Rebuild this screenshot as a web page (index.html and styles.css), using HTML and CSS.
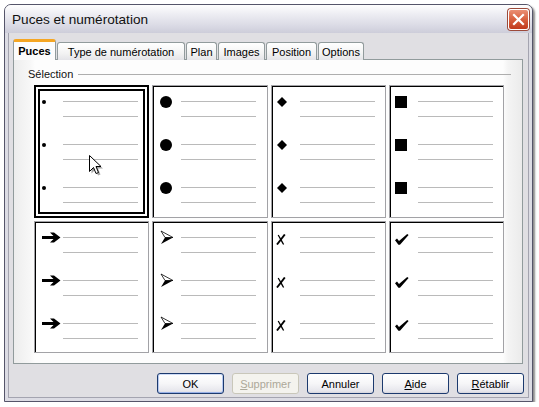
FILE: index.html
```html
<!DOCTYPE html>
<html lang="fr">
<head>
<meta charset="utf-8">
<title>Puces et numérotation</title>
<link rel="stylesheet" href="styles.css">
</head>
<body>
<div class="window">
  <div class="titlebar">
    <span class="title">Puces et numérotation</span>
    <span class="close"><svg width="13" height="13" viewBox="0 0 13 13"><path d="M2 2 L11 11 M11 2 L2 11" stroke="#fff" stroke-width="2.2" stroke-linecap="square"/></svg></span>
  </div>
  <div class="client">
    <div class="tabs">
      <div class="tab active t-puces">Puces</div>
      <div class="tab t-type">Type de numérotation</div>
      <div class="tab t-plan">Plan</div>
      <div class="tab t-images">Images</div>
      <div class="tab t-position">Position</div>
      <div class="tab t-options">Options</div>
    </div>
    <div class="panel">
      <div class="legend"><span>Sélection</span><span class="rule"></span></div>
      <div class="grid">
        <div class="cell selected">
          <div class="item"><span class="ico"><i class="dot"></i></span><span class="lines"><i></i><i></i></span></div>
          <div class="item"><span class="ico"><i class="dot"></i></span><span class="lines"><i></i><i></i></span></div>
          <div class="item"><span class="ico"><i class="dot"></i></span><span class="lines"><i></i><i></i></span></div>
        </div>
        <div class="cell">
          <div class="item"><span class="ico"><i class="circle"></i></span><span class="lines"><i></i><i></i></span></div>
          <div class="item"><span class="ico"><i class="circle"></i></span><span class="lines"><i></i><i></i></span></div>
          <div class="item"><span class="ico"><i class="circle"></i></span><span class="lines"><i></i><i></i></span></div>
        </div>
        <div class="cell">
          <div class="item"><span class="ico"><svg class="diamond" width="10" height="10" viewBox="0 0 10 10"><path d="M5 0 L10 5 L5 10 L0 5 Z"/></svg></span><span class="lines"><i></i><i></i></span></div>
          <div class="item"><span class="ico"><svg class="diamond" width="10" height="10" viewBox="0 0 10 10"><path d="M5 0 L10 5 L5 10 L0 5 Z"/></svg></span><span class="lines"><i></i><i></i></span></div>
          <div class="item"><span class="ico"><svg class="diamond" width="10" height="10" viewBox="0 0 10 10"><path d="M5 0 L10 5 L5 10 L0 5 Z"/></svg></span><span class="lines"><i></i><i></i></span></div>
        </div>
        <div class="cell">
          <div class="item"><span class="ico"><i class="square"></i></span><span class="lines"><i></i><i></i></span></div>
          <div class="item"><span class="ico"><i class="square"></i></span><span class="lines"><i></i><i></i></span></div>
          <div class="item"><span class="ico"><i class="square"></i></span><span class="lines"><i></i><i></i></span></div>
        </div>
        <div class="cell">
          <div class="item"><span class="ico"><svg class="arrow" width="19" height="11" viewBox="0 0 19 11"><path d="M0 4 H11.5 L8 0.5 H12 L18.5 5.5 L12 10.5 H8 L11.5 7 H0 Z"/></svg></span><span class="lines"><i></i><i></i></span></div>
          <div class="item"><span class="ico"><svg class="arrow" width="19" height="11" viewBox="0 0 19 11"><path d="M0 4 H11.5 L8 0.5 H12 L18.5 5.5 L12 10.5 H8 L11.5 7 H0 Z"/></svg></span><span class="lines"><i></i><i></i></span></div>
          <div class="item"><span class="ico"><svg class="arrow" width="19" height="11" viewBox="0 0 19 11"><path d="M0 4 H11.5 L8 0.5 H12 L18.5 5.5 L12 10.5 H8 L11.5 7 H0 Z"/></svg></span><span class="lines"><i></i><i></i></span></div>
        </div>
        <div class="cell">
          <div class="item"><span class="ico"><svg class="head" width="14" height="15" viewBox="0 0 14 15"><path d="M1 1 L13 7.5 L5 7.5 Z" fill="#fff" stroke="#000" stroke-width="0.8"/><path d="M5 7.5 L13 7.5 L1 14 Z"/></svg></span><span class="lines"><i></i><i></i></span></div>
          <div class="item"><span class="ico"><svg class="head" width="14" height="15" viewBox="0 0 14 15"><path d="M1 1 L13 7.5 L5 7.5 Z" fill="#fff" stroke="#000" stroke-width="0.8"/><path d="M5 7.5 L13 7.5 L1 14 Z"/></svg></span><span class="lines"><i></i><i></i></span></div>
          <div class="item"><span class="ico"><svg class="head" width="14" height="15" viewBox="0 0 14 15"><path d="M1 1 L13 7.5 L5 7.5 Z" fill="#fff" stroke="#000" stroke-width="0.8"/><path d="M5 7.5 L13 7.5 L1 14 Z"/></svg></span><span class="lines"><i></i><i></i></span></div>
        </div>
        <div class="cell">
          <div class="item"><span class="ico"><svg class="cross" width="10" height="11" viewBox="0 0 10 11"><path d="M1 10.5 L8.8 0.5" stroke="#000" stroke-width="1.9" fill="none"/><path d="M2.2 1 C3.5 3 5 6 7.6 10.5" stroke="#000" stroke-width="1.3" fill="none"/></svg></span><span class="lines"><i></i><i></i></span></div>
          <div class="item"><span class="ico"><svg class="cross" width="10" height="11" viewBox="0 0 10 11"><path d="M1 10.5 L8.8 0.5" stroke="#000" stroke-width="1.9" fill="none"/><path d="M2.2 1 C3.5 3 5 6 7.6 10.5" stroke="#000" stroke-width="1.3" fill="none"/></svg></span><span class="lines"><i></i><i></i></span></div>
          <div class="item"><span class="ico"><svg class="cross" width="10" height="11" viewBox="0 0 10 11"><path d="M1 10.5 L8.8 0.5" stroke="#000" stroke-width="1.9" fill="none"/><path d="M2.2 1 C3.5 3 5 6 7.6 10.5" stroke="#000" stroke-width="1.3" fill="none"/></svg></span><span class="lines"><i></i><i></i></span></div>
        </div>
        <div class="cell">
          <div class="item"><span class="ico"><svg class="check" width="14" height="11" viewBox="0 0 14 11"><path d="M0 6.2 L2 4.6 L4 7 L12.2 0 L13.6 1 L5 10.8 L3.4 10.8 Z"/></svg></span><span class="lines"><i></i><i></i></span></div>
          <div class="item"><span class="ico"><svg class="check" width="14" height="11" viewBox="0 0 14 11"><path d="M0 6.2 L2 4.6 L4 7 L12.2 0 L13.6 1 L5 10.8 L3.4 10.8 Z"/></svg></span><span class="lines"><i></i><i></i></span></div>
          <div class="item"><span class="ico"><svg class="check" width="14" height="11" viewBox="0 0 14 11"><path d="M0 6.2 L2 4.6 L4 7 L12.2 0 L13.6 1 L5 10.8 L3.4 10.8 Z"/></svg></span><span class="lines"><i></i><i></i></span></div>
        </div>
      </div>
    </div>
    <div class="buttons">
      <button class="btn default">OK</button>
      <button class="btn" disabled><u>S</u>upprimer</button>
      <button class="btn">Annuler</button>
      <button class="btn"><u>A</u>ide</button>
      <button class="btn"><u>R</u>établir</button>
    </div>
  </div>
  <svg class="cursor" width="14" height="22" viewBox="0 0 14 22"><path d="M1.5 1.5 V17.5 L5.5 13.5 L8 19.5 L10.5 18.5 L8 12.5 H13 Z" fill="#000" opacity="0.35" transform="translate(1 1)"/><path d="M0.5 0.5 V16.5 L4.5 12.5 L7 18.5 L9.5 17.5 L7 11.5 H12 Z" fill="#fff" stroke="#000" stroke-width="1" stroke-linejoin="miter"/></svg>
</div>
</body>
</html>
```
FILE: styles.css
```css
* { box-sizing: border-box; }
html, body { margin: 0; padding: 0; background: #fff; }
body {
  font-family: "Liberation Sans", Arial, sans-serif;
  font-size: 11px;
  color: #000;
}
.window {
  position: relative;
  width: 529px;
  height: 398px;
  margin: 4px 0 0 4px;
  border: 1px solid #55556a;
  border-radius: 7px 7px 0 0;
  background: #e0dfe3;
  display: flex;
  flex-direction: column;
  box-shadow: 2px 2px 2px rgba(0, 0, 0, 0.45);
}
.titlebar {
  height: 28px;
  flex: none;
  border-radius: 6px 6px 0 0;
  background: linear-gradient(#fefefe, #ececf2 35%, #dcdce6 70%, #cdcdda);
  display: flex;
  align-items: center;
  justify-content: space-between;
  padding: 1px 3px 0 7px;
}
.title {
  font-size: 13.6px;
  color: #111;
}
.close {
  width: 21px;
  height: 21px;
  border-radius: 3px;
  border: 1px solid #fff;
  box-shadow: 0 0 0 1px #9c4a3a;
  background: linear-gradient(#ea8f74, #d8603f 50%, #c0391c);
  display: flex;
  align-items: center;
  justify-content: center;
}
.client {
  flex: 1;
  display: flex;
  flex-direction: column;
  border: solid #dcdce4;
  border-width: 0 3px 3px;
  box-shadow: inset 1px 0 0 #a4a4b0, inset -1px 0 0 #a4a4b0, inset 0 -1px 0 #a4a4b0;
  padding: 6px 5px 0 5px;
}
.tabs {
  display: flex;
  align-items: flex-end;
  height: 21px;
  margin-bottom: -1px;
  position: relative;
  z-index: 1;
}
.tab {
  height: 18px;
  border: 1px solid #919b9c;
  border-bottom: none;
  border-radius: 3px 3px 0 0;
  background: linear-gradient(#ffffff, #f3f3f3 60%, #e4e4e8);
  display: flex;
  align-items: center;
  justify-content: center;
  margin-left: 1px;
  white-space: nowrap;
}
.tab.active {
  height: 21px;
  border-top: 3px solid #f5a623;
  background: #fcfcfc;
  font-weight: bold;
  margin-left: 0;
  padding-bottom: 1px;
}
.t-puces { width: 43px; }
.t-type { width: 128px; }
.t-plan { width: 31px; }
.t-images { width: 47px; }
.t-position { width: 51px; }
.t-options { width: 46px; }
.panel {
  height: 305px;
  flex: none;
  width: 510px;
  border: 1px solid #919b9c;
  background: linear-gradient(to right, #ededed, #f7f7f7 16px, #fdfdfd 21px, #fdfdfd 489px, #f4f4f4 494px, #ebebeb);
  padding: 7px 11px 0 14px;
}
.legend {
  display: flex;
  align-items: center;
  height: 14px;
  color: #111;
}
.legend .rule {
  flex: 1;
  height: 1px;
  background: #aeaeae;
  margin-left: 5px;
  margin-top: 1px;
}
.grid {
  margin: 4px 0 0 6px;
  width: 470px;
  height: 268px;
  display: grid;
  grid-template-columns: repeat(4, 1fr);
  grid-template-rows: 133px 132px;
  gap: 3px;
}
.cell {
  background: #fff;
  padding-top: 10px;
  overflow: hidden;
  box-shadow: inset 0 0 0 1px #a2a2a6, inset 2px 2px 0 0 #000;
}
.cell.selected {
  box-shadow: inset 0 0 0 2px #000, inset 0 0 0 4px #fff, inset 0 0 0 6px #000;
}
.item {
  display: flex;
  height: 43px;
}
.item:last-child { height: auto; }
.ico {
  flex: none;
  width: 29px;
  height: 13px;
  display: flex;
  align-items: center;
}
.ico svg { display: block; fill: #000; }
.lines {
  width: 75px;
  padding-top: 6px;
}
.lines i {
  display: block;
  height: 1px;
  background: #bababa;
}
.lines i + i { margin-top: 14px; }
.dot {
  width: 4px; height: 4px;
  border-radius: 50%;
  background: #000;
  margin-left: 8px;
}
.circle {
  width: 12px; height: 12px;
  border-radius: 50%;
  background: #000;
  margin-left: 8px;
}
.square {
  width: 12px; height: 12px;
  background: #000;
  margin-left: 6px;
}
.diamond { margin-left: 6px; }
.arrow { margin-left: 8px; }
.head { margin-left: 8px; }
.cross { margin-left: 5px; margin-top: 4px; }
.check { margin-left: 6px; margin-top: 4px; }
.buttons {
  display: flex;
  justify-content: flex-end;
  gap: 8px;
  margin-top: 9px;
  padding-right: 0;
}
.btn {
  width: 67px;
  height: 21px;
  padding: 0;
  border: 1px solid #1c3a6e;
  border-radius: 3px;
  background: linear-gradient(#ffffff, #f6f6f8 50%, #e6e6ec 90%, #d4d4dc);
  font-family: "Liberation Sans", Arial, sans-serif;
  font-size: 11px;
  color: #000;
}
.btn.default {
  box-shadow: inset 0 1px 0 #cfdcf7, inset 0 -1px 0 #97b0e6, inset 1px 0 0 #b6c8f0, inset -1px 0 0 #b6c8f0;
}
.btn:disabled {
  border-color: #c9c7ba;
  background: #f4f3ee;
  color: #aca899;
}
.cursor {
  position: absolute;
  left: 84px;
  top: 150px;
}
```
